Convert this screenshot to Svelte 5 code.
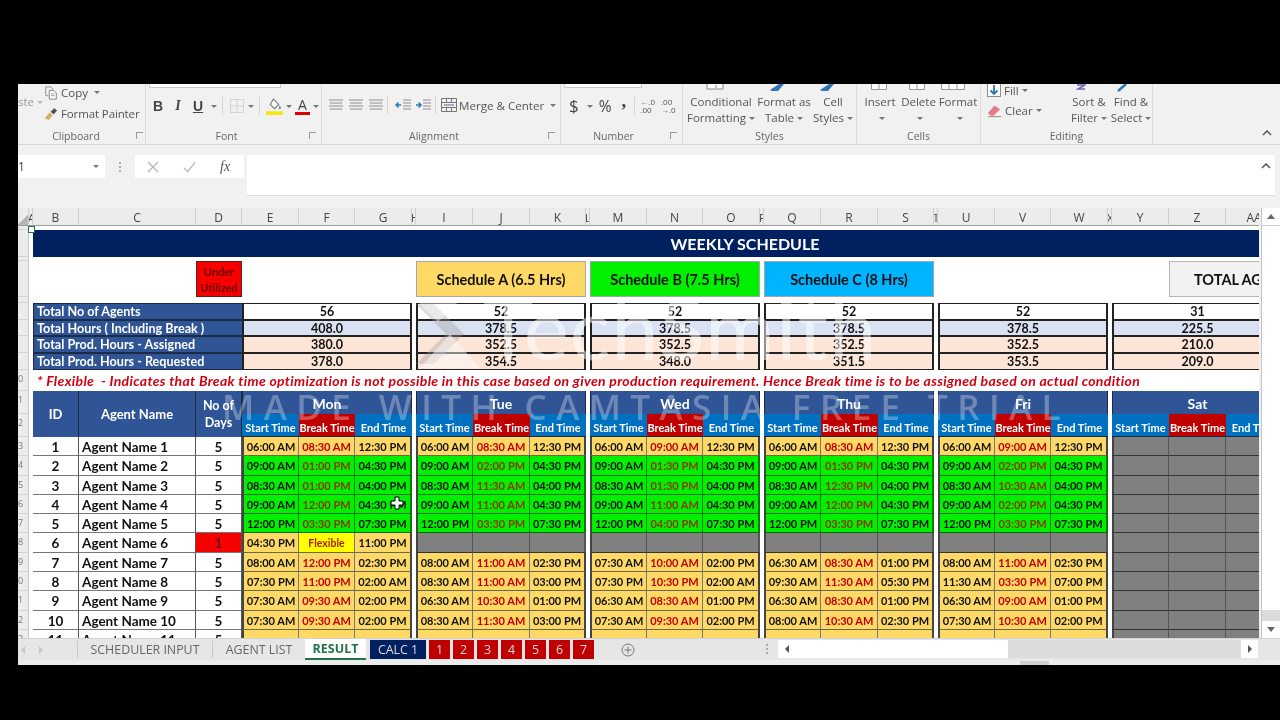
<script>
  const letters = ['', 'A', 'B', 'C', 'D', 'E', 'F', 'G', 'H', 'I', 'J', 'K', 'L', 'M', 'N', 'O', 'P', 'Q', 'R', 'S', 'T', 'U', 'V', 'W', 'X', 'Y', 'Z', 'AA', 'AB', 'AC'];
  const narrow = ['A', 'H', 'L', 'P', 'T', 'X'];

  const totals = [
    { label: 'Total No of Agents', tone: 'plain', values: ['56', '52', '52', '52', '52', '31'] },
    { label: 'Total Hours ( Including Break )', tone: 'blue', values: ['408.0', '378.5', '378.5', '378.5', '378.5', '225.5'] },
    { label: 'Total Prod. Hours - Assigned', tone: 'pink', values: ['380.0', '352.5', '352.5', '352.5', '352.5', '210.0'] },
    { label: 'Total Prod. Hours - Requested', tone: 'pink', values: ['378.0', '354.5', '348.0', '351.5', '353.5', '209.0'] }
  ];

  const week = [
    { name: 'Mon', times: ['06:00 AM,08:30 AM,12:30 PM', '09:00 AM,01:00 PM,04:30 PM', '08:30 AM,01:00 PM,04:00 PM', '09:00 AM,12:00 PM,04:30 PM', '12:00 PM,03:30 PM,07:30 PM', '04:30 PM,Flexible,11:00 PM', '08:00 AM,12:00 PM,02:30 PM', '07:30 PM,11:00 PM,02:00 AM', '07:30 AM,09:30 AM,02:00 PM', '07:30 AM,09:30 AM,02:00 PM', ',,'] },
    { name: 'Tue', times: ['06:00 AM,08:30 AM,12:30 PM', '09:00 AM,02:00 PM,04:30 PM', '08:30 AM,11:30 AM,04:00 PM', '09:00 AM,11:00 AM,04:30 PM', '12:00 PM,03:30 PM,07:30 PM', '', '08:00 AM,11:00 AM,02:30 PM', '08:30 AM,11:00 AM,03:00 PM', '06:30 AM,10:30 AM,01:00 PM', '08:30 AM,11:30 AM,03:00 PM', ',,'] },
    { name: 'Wed', times: ['06:00 AM,09:00 AM,12:30 PM', '09:00 AM,01:30 PM,04:30 PM', '08:30 AM,01:30 PM,04:00 PM', '09:00 AM,11:00 AM,04:30 PM', '12:00 PM,04:00 PM,07:30 PM', '', '07:30 AM,10:00 AM,02:00 PM', '07:30 PM,10:30 PM,02:00 AM', '06:30 AM,08:30 AM,01:00 PM', '07:30 AM,09:30 AM,02:00 PM', ',,'] },
    { name: 'Thu', times: ['06:00 AM,08:30 AM,12:30 PM', '09:00 AM,01:30 PM,04:30 PM', '08:30 AM,12:30 PM,04:00 PM', '09:00 AM,12:00 PM,04:30 PM', '12:00 PM,03:30 PM,07:30 PM', '', '06:30 AM,08:30 AM,01:00 PM', '09:30 AM,11:30 AM,05:30 PM', '06:30 AM,08:30 AM,01:00 PM', '08:00 AM,10:30 AM,02:30 PM', ',,'] },
    { name: 'Fri', times: ['06:00 AM,09:00 AM,12:30 PM', '09:00 AM,02:00 PM,04:30 PM', '08:30 AM,10:30 AM,04:00 PM', '09:00 AM,02:00 PM,04:30 PM', '12:00 PM,03:30 PM,07:30 PM', '', '08:00 AM,11:00 AM,02:30 PM', '11:30 AM,03:30 PM,07:00 PM', '06:30 AM,09:00 AM,01:00 PM', '07:30 AM,10:30 AM,02:00 PM', ',,'] },
    { name: 'Sat', times: ['', '', '', '', '', '', '', '', '', '', ''] }
  ];

  const rows = Array.from({ length: 11 }, (_, i) => i);
  const subHeads = ['Start Time', 'Break Time', 'End Time'];
  const isGreen = (i) => i >= 1 && i <= 4;
  const cellsFor = (day, i) => (day.times[i] === '' ? ['', '', ''] : day.times[i].split(','));
  const toneFor = (day, i) => (day.times[i] === '' ? 'off' : isGreen(i) ? 'green' : 'orange');
  const redTabs = ['1', '2', '3', '4', '5', '6', '7'];
</script>

<div class="screen">
  <div class="window">
    <div class="ribbon">
      <section class="group clipboard">
        <div class="body">
          <div class="paste">ste<i class="caret faint"></i></div>
          <div class="stack">
            <div class="line copy">
              <svg viewBox="0 0 16 16" width="14" height="14"><path d="M2 1h6l2 2v2M2 1v10h3" fill="none" stroke="#8a8a8a"/><path d="M6 5h5l3 3v7H6z" fill="#fff" stroke="#777"/><path d="M8 9h4M8 11h4" stroke="#999"/></svg>
              <span>Copy</span><i class="caret"></i>
            </div>
            <div class="line painter">
              <svg viewBox="0 0 16 16" width="15" height="15"><path d="M1 13l5-6 3 3-4 5z" fill="#d9a95c"/><path d="M7 6l4-4 3 3-4 4z" fill="#555"/></svg>
              <span>Format Painter</span>
            </div>
          </div>
        </div>
        <div class="label">Clipboard<i class="launcher"></i></div>
      </section>

      <section class="group font">
        <div class="combo"></div>
        <div class="body row">
          <b class="tool sans">B</b>
          <em class="tool serif strong">I</em>
          <u class="tool sans">U</u>
          <i class="caret"></i>
          <span class="sep"></span>
          <svg class="icon" viewBox="0 0 16 16" width="16" height="16"><path d="M1.5 1.5h13v13h-13zM8 1.5v13M1.5 8h13" fill="none" stroke="#bbb" stroke-dasharray="1 1"/></svg>
          <i class="caret"></i>
          <span class="sep"></span>
          <svg class="icon" viewBox="0 0 16 16" width="17" height="17"><path d="M7 1l5 5-4 4-4-4z" fill="#fff" stroke="#777"/><path d="M13 7c1 2 1.500 3 0 3.500-1-.5-1-1.500 0-3.500z" fill="#3d78c2"/><rect x="0" y="12.500" width="16" height="3.500" fill="#f4e80c"/></svg>
          <i class="caret"></i>
          <span class="colour">A</span>
          <i class="caret"></i>
        </div>
        <div class="label">Font<i class="launcher"></i></div>
      </section>

      <section class="group align">
        <div class="body row">
          {#each [0, 1, 2] as n}
            <svg class="icon lines" viewBox="0 0 14 12" width="14" height="12"><path d="M0 1h14M1 4h12M0 7h14M1 10h12" stroke="#8d8d8d" fill="none"/></svg>
          {/each}
          <span class="sep"></span>
          <svg class="icon indent" viewBox="0 0 16 12" width="16" height="12"><path d="M8 1h8M8 4h8M8 7h8M8 10h8" stroke="#8d8d8d"/><path d="M6 6H1m2.500-2.500L1 6l2.500 2.500" stroke="#2e75b6" stroke-width="1.500" fill="none"/></svg>
          <svg class="icon indent" viewBox="0 0 16 12" width="16" height="12"><path d="M8 1h8M8 4h8M8 7h8M8 10h8" stroke="#8d8d8d"/><path d="M1 6h5M3.500 3.500L6 6 3.500 8.500" stroke="#2e75b6" stroke-width="1.500" fill="none"/></svg>
          <span class="sep"></span>
          <svg class="icon mergeicon" viewBox="0 0 16 14" width="16" height="14"><path d="M.5.5h15v13H.5zM.5 4.500h15M.5 9.500h15M5.500.5v4M10.500.5v4M5.500 9.500v4M10.500 9.500v4" fill="none" stroke="#777"/><path d="M3 7h10" stroke="#2e75b6"/></svg>
          <span class="merge">Merge &amp; Center</span>
          <i class="caret"></i>
        </div>
        <div class="label">Alignment<i class="launcher"></i></div>
      </section>

      <section class="group number">
        <div class="combo"></div>
        <div class="body row">
          <span class="dollar">$</span>
          <i class="caret"></i>
          <span class="percent">%</span>
          <b class="comma">,</b>
          <span class="sep"></span>
          <span class="decimal"><span><b>←</b>.0</span><span>.00</span></span>
          <span class="decimal"><span>.00</span><span><b>→</b>.0</span></span>
        </div>
        <div class="label">Number<i class="launcher"></i></div>
      </section>

      <section class="group styles">
        <div class="tops">
          <svg viewBox="0 0 20 8" width="20" height="8" style="margin-left:23px"><path d="M1 0v5h16V0M10 1v3" fill="#fff" stroke="#888"/></svg>
          <svg viewBox="0 0 24 8" width="24" height="8" style="margin-left:38px"><path d="M6 6l9-6h5l-6 7H8z" fill="#2e75b6"/></svg>
          <svg viewBox="0 0 24 8" width="24" height="8" style="margin-left:26px"><path d="M6 6l9-6h5l-6 7H8z" fill="#2e75b6"/></svg>
        </div>
        <div class="body big">
          <div class="bigbtn" style="width:74px"><span>Conditional</span><span>Formatting<i class="caret"></i></span></div>
          <div class="bigbtn" style="width:52px"><span>Format as</span><span>Table<i class="caret"></i></span></div>
          <div class="bigbtn" style="width:46px"><span>Cell</span><span>Styles<i class="caret"></i></span></div>
        </div>
        <div class="label">Styles</div>
      </section>

      <section class="group cells">
        <div class="tops">
          <svg viewBox="0 0 16 6" width="16" height="6" style="margin-left:14px"><path d="M.5 0v5.500h15V0M8 0v5" fill="#fff" stroke="#999"/></svg>
          <svg viewBox="0 0 16 6" width="16" height="6" style="margin-left:22px"><path d="M.5 0v5.500h15V0M8 0v5" fill="#fff" stroke="#999"/></svg>
          <svg viewBox="0 0 24 6" width="24" height="6" style="margin-left:16px"><path d="M.5 0v5.500h23V0M8 0v5M16 0v5" fill="#fff" stroke="#999"/></svg>
        </div>
        <div class="body big">
          <div class="bigbtn" style="width:40px"><span>Insert</span><span><i class="caret"></i></span></div>
          <div class="bigbtn" style="width:37px"><span>Delete</span><span><i class="caret"></i></span></div>
          <div class="bigbtn" style="width:42px"><span>Format</span><span><i class="caret"></i></span></div>
        </div>
        <div class="label">Cells</div>
      </section>

      <section class="group editing">
        <div class="tops">
          <svg viewBox="0 0 10 6" width="10" height="6" style="margin-left:95px"><path d="M1 1h8L2 5h7" fill="none" stroke="#7b5fb5" stroke-width="1.500"/></svg>
          <svg viewBox="0 0 12 8" width="12" height="8" style="margin-left:30px"><path d="M10 0L2 7" stroke="#2e75b6" stroke-width="2.500"/></svg>
        </div>
        <div class="body big">
          <div class="stack fillclear">
            <div class="line fill">
              <svg viewBox="0 0 14 14" width="14" height="14"><rect x=".5" y=".5" width="13" height="13" fill="#fff" stroke="#8d8d8d"/><path d="M7 2v9M3.500 7.500L7 11l3.500-3.500" fill="none" stroke="#2e75b6" stroke-width="1.800"/></svg>
              <span>Fill</span><i class="caret"></i>
            </div>
            <div class="line clear">
              <svg viewBox="0 0 16 14" width="15" height="14"><path d="M1 9l7-8 6 4-7 7H4z" fill="#e57a8c"/><path d="M1 13h14" stroke="#888"/></svg>
              <span>Clear</span><i class="caret"></i>
            </div>
          </div>
          <div class="bigbtn" style="width:42px"><span>Sort &amp;</span><span>Filter<i class="caret"></i></span></div>
          <div class="bigbtn" style="width:42px"><span>Find &amp;</span><span>Select<i class="caret"></i></span></div>
        </div>
        <div class="label">Editing</div>
      </section>

      <div class="collapse"><svg viewBox="0 0 10 6" width="10" height="6"><path d="M1 5l4-4 4 4" fill="none" stroke="#555" stroke-width="1.500"/></svg></div>
    </div>

    <div class="formula">
      <div class="namebox"><span>1</span><i class="caret"></i></div>
      <div class="dots"></div>
      <div class="fxbox">
        <svg viewBox="0 0 12 12" width="12" height="12"><path d="M1 1l10 10M11 1L1 11" stroke="#b5b5b5" stroke-width="1.300"/></svg>
        <svg viewBox="0 0 14 12" width="13" height="12"><path d="M1 7l4 4 8-10" fill="none" stroke="#b5b5b5" stroke-width="1.300"/></svg>
        <em>fx</em>
      </div>
      <div class="input"><svg viewBox="0 0 10 6" width="10" height="6"><path d="M1 5l4-4 4 4" fill="none" stroke="#555" stroke-width="1.500"/></svg></div>
    </div>

    <div class="sheetwrap">
      <div class="viewport">
        <div class="grid">
          {#each letters as l}
            <div class="letter" class:corner={l === ''} class:narrow={narrow.includes(l)}>{l}</div>
          {/each}

          <div class="rowhead"></div>
          <div></div>

          <div class="rowhead"></div>
          <div></div>
          <div class="title">WEEKLY SCHEDULE</div>

          <div class="rowhead"></div>
          <div></div>

          <div class="rowhead"></div>
          <div></div>
          <div class="span2"></div>
          <div class="under">Under Utilized</div>
          <div class="span3"></div>
          <div></div>
          <div class="span3 plan a">Schedule A (6.5 Hrs)</div>
          <div></div>
          <div class="span3 plan b">Schedule B (7.5 Hrs)</div>
          <div></div>
          <div class="span3 plan c">Schedule C (8 Hrs)</div>
          <div></div>
          <div class="span3"></div>
          <div></div>
          <div></div>
          <div class="totalbox">TOTAL AGENTS</div>

          <div class="rowhead"></div>
          <div></div>

          {#each totals as t}
            <div class="rowhead"></div>
            <div></div>
            <div class="span3 sumlabel">{t.label}</div>
            {#each t.values as v, i}
              <div class="span3 sum {t.tone}">{v}</div>
              {#if i < 5}<div></div>{/if}
            {/each}
          {/each}

          <div class="rowhead">0</div>
          <div></div>
          <div class="note">* Flexible  - Indicates that Break time optimization is not possible in this case based on given production requirement. Hence Break time is to be assigned based on actual condition</div>

          <div class="rowhead">1</div>
          <div></div>
          <div class="headcell tall">ID</div>
          <div class="headcell tall">Agent Name</div>
          <div class="headcell tall nodays">No of Days</div>
          {#each week as day, i}
            <div class="span3 headcell dayname">{day.name}</div>
            {#if i < 5}<div></div>{/if}
          {/each}

          <div class="rowhead">2</div>
          <div></div>
          {#each week as day, i}
            {#each subHeads as s}
              <div class="sub" class:break={s === 'Break Time'}>{s}</div>
            {/each}
            {#if i < 5}<div></div>{/if}
          {/each}

          {#each rows as r}
            <div class="rowhead">{(r + 3) % 10}</div>
            <div></div>
            <div class="agent center">{r + 1}</div>
            <div class="agent">Agent Name {r + 1}</div>
            <div class="agent center" class:short={r === 5}>{r === 5 ? 1 : 5}</div>
            {#each week as day, i}
              {#each cellsFor(day, r) as time, c}
                <div class="time {toneFor(day, r)}" class:first={c === 0} class:last={c === 2} class:red={c === 1} class:flex={time === 'Flexible'}>{time}</div>
              {/each}
              {#if i < 5}<div></div>{/if}
            {/each}
          {/each}
        </div>

        <i class="handle"></i>
        <div class="logo" aria-hidden="true">
          <svg viewBox="0 0 64 68" width="64" height="68"><path d="M0 4h18l30 30-30 30H0l30-30z" fill="#9a9a9a" opacity=".35"/><path d="M34 34l30 34H4z" fill="#fff" opacity=".45"/><path d="M0 0h44L22 22z" fill="#fff" opacity=".4"/></svg>
        </div>
        <div class="techsmith" aria-hidden="true">TechSmith</div>
        <div class="camtasia" aria-hidden="true">MADE WITH CAMTASIA FREE TRIAL</div>
        <svg class="cursor" viewBox="0 0 14 14" width="14" height="14" aria-hidden="true"><path d="M5 1h4v4h4v4H9v4H5V9H1V5h4z" fill="#fff" stroke="#000"/></svg>
      </div>

      <div class="vscroll">
        <div class="arrow"><i class="up"></i></div>
        <div class="thumb"></div>
        <div class="track"></div>
        <div class="arrow"><i class="down"></i></div>
      </div>
    </div>

    <div class="tabs">
      <div class="navs">
        <i class="nav left"></i><i class="nav right"></i>
      </div>
      <div class="tab plain first">SCHEDULER INPUT</div>
      <div class="tab plain second">AGENT LIST</div>
      <div class="tab current">RESULT</div>
      <div class="tab calc">CALC 1</div>
      {#each redTabs as t}
        <div class="tab num">{t}</div>
      {/each}
      <div class="add"><svg viewBox="0 0 14 14" width="14" height="14"><circle cx="7" cy="7" r="6" fill="none" stroke="#777"/><path d="M7 3.500v7M3.500 7h7" stroke="#777"/></svg></div>
      <div class="hdots"></div>
      <div class="hscroll">
        <div class="hbtn"><i class="nav left dark"></i></div>
        <div class="hthumb"></div>
        <div class="htrack"></div>
        <div class="hbtn"><i class="nav right dark"></i></div>
      </div>
    </div>

    <div class="status"><div class="grip"></div></div>
  </div>
</div>

<style>
  :global(body) { margin: 0; background: #000; }

  .screen {
    width: 1280px; height: 720px; box-sizing: border-box; overflow: hidden;
    padding: 84px 0 55px 18px; background: #000;
    font-family: "Open Sans", "Liberation Sans", sans-serif;
  }
  .window { height: 581px; display: flex; flex-direction: column; background: #f0f0f0; overflow: hidden; filter: blur(0.35px); }

  .caret { display: inline-block; width: 0; height: 0; margin-left: 5px; border: 3px solid transparent; border-top: 3px solid #777; border-bottom: 0; vertical-align: middle; }
  .caret.faint { border-top-color: #bbb; }

  /* ribbon */
  .ribbon { height: 60px; flex: none; display: flex; position: relative; background: #f1f1f1; border-bottom: 1px solid #d6d6d6; box-sizing: content-box; font-size: 11.5px; color: #555; }
  .group { position: relative; display: flex; flex-direction: column; box-sizing: border-box; height: 60px; border-right: 1px solid #dcdcdc; overflow: hidden; }
  .body { flex: 1; display: flex; min-height: 0; }
  .label { height: 20px; flex: none; padding-right: 14px; text-align: center; line-height: 24px; font-size: 10.5px; color: #666; position: relative; }
  .launcher { position: absolute; right: 5px; top: 8px; width: 6px; height: 6px; border-left: 1px solid #999; border-top: 1px solid #999; }
  .row { align-items: center; }
  .sep { width: 1px; height: 18px; background: #d4d4d4; flex: none; }
  .combo { height: 3px; flex: none; margin: 0 40px 0 3px; background: #fff; border: 1px solid #c9c9c9; border-top: 0; }
  .icon { flex: none; }
  .tops { position: absolute; top: 0; left: 0; display: flex; }

  .clipboard { width: 128px; }
  .clipboard .label { padding-right: 0; padding-left: 3px; width: 110px; }
  .clipboard .launcher { right: -12px; }
  .paste { width: 26px; padding-top: 10px; color: #9a9a9a; font-size: 11.5px; line-height: 16px; }
  .stack { display: flex; flex-direction: column; }
  .line { display: flex; align-items: center; gap: 3px; white-space: nowrap; }
  .copy { margin-top: 1px; height: 15px; }
  .painter { margin-top: 5px; height: 16px; gap: 2px; letter-spacing: -0.12px; }
  .clipboard .caret { margin-left: 3px; }

  .font { width: 176px; }
  .font .body { padding-left: 2px; }
  .tool { width: 20px; text-align: center; font-size: 14px; color: #444; font-style: normal; text-decoration: none; flex: none; }
  .serif { font-family: "Liberation Serif", serif; }
  .sans { font-family: "Liberation Sans", sans-serif; font-weight: 700; }
  .strong { font-weight: 700; }
  em.tool { font-style: italic; }
  u.tool { text-decoration: underline; }
  .font .caret { margin-left: 3px; flex: none; }
  .font .sep { margin: 0 6px 0 5px; }
  .colour { margin-left: 3px; width: 15px; flex: none; text-align: center; font-size: 14px; line-height: 14px; color: #444; border-bottom: 3px solid #d90000; }

  .align { width: 239px; }
  .align .body { padding: 2px 0 0 7px; gap: 6px; }
  .align .sep { margin: 0 1px 0 -2px; }
  .indent + .indent { margin-left: -2px; }
  .mergeicon { margin-left: -2px; }
  .merge { white-space: nowrap; margin-left: -4px; font-size: 11.6px; }
  .align .caret { margin-left: 0; }

  .number { width: 122px; }
  .number .body { padding-left: 8px; }
  .number .label { padding-right: 16px; }
  .dollar { font-size: 17px; line-height: 18px; color: #444; }
  .number .caret { margin-left: 8px; }
  .percent { margin-left: 6px; font-size: 15.5px; color: #444; }
  .comma { margin: -10px 8px 0 10px; font-family: "Liberation Serif", serif; font-size: 19px; line-height: 16px; color: #444; }
  .decimal { display: flex; flex-direction: column; margin-left: 5px; font-size: 8px; line-height: 8.5px; color: #555; }
  .decimal + .decimal { margin-left: 6px; }
  .decimal b { color: #2e75b6; }

  .big { padding-top: 10px; }
  .bigbtn { display: flex; flex-direction: column; align-items: center; flex: none; white-space: nowrap; line-height: 16px; gap: 0; font-size: 11.5px; }
  .bigbtn .caret { margin-left: 3px; }

  .styles { width: 174px; }
  .styles .big { padding-left: 1px; }
  .styles .label { padding-right: 0; }
  .cells { width: 124px; }
  .cells .big { padding-left: 3px; }
  .cells .label { padding-right: 0; }
  .editing { width: 172px; }
  .editing .big { padding-top: 0; padding-left: 6px; }
  .editing .bigbtn { padding-top: 10px; }
  .editing .label { padding-right: 0; }
  .fillclear { width: 82px; }
  .fill { height: 14px; margin-top: -1px; gap: 3px; }
  .clear { margin-top: 6px; gap: 3px; }
  .fillclear .caret { margin-left: 0; }
  .collapse { position: absolute; right: 8px; bottom: 5px; }

  /* formula bar */
  .formula { height: 63px; flex: none; box-sizing: border-box; padding-top: 10px; display: flex; align-items: flex-start; background: #f1f1f1; color: #444; }
  .namebox { width: 87px; height: 23px; box-sizing: border-box; padding: 0 4px 0 0; display: flex; align-items: center; justify-content: space-between; background: #fff; font-size: 12px; }
  .namebox .caret { margin-right: 2px; }
  .dots { width: 2px; height: 10px; margin: 7px 14px; border-left: 2px dotted #aaa; box-sizing: border-box; }
  .fxbox { width: 109px; height: 23px; margin-left: 0; display: flex; align-items: center; gap: 24px; padding-left: 12px; box-sizing: border-box; background: #fff; }
  .fxbox em { font-family: "Liberation Serif", serif; font-size: 14px; color: #555; }
  .input { flex: 1; height: 41px; margin: 0 5px 0 3px; background: #fff; border-bottom: 1px solid #ddd; display: flex; justify-content: flex-end; padding: 8px 4px 0 0; box-sizing: border-box; }

  /* sheet */
  .sheetwrap { height: 430px; flex: none; display: flex; background: #f1f1f1; }
  .viewport { width: 1241px; flex: none; position: relative; overflow: hidden; background: #fff; }
  .grid {
    display: grid; width: max-content; color: #111;
    font-family: Lato, "Liberation Sans", sans-serif;
    grid-template-columns: 11px 4px 46px 117px 46px 57px 56px 57px 4px 57px 57px 56px 4px 57px 56px 57px 4px 57px 57px 56px 4px 57px 56px 57px 4px 57px 57px 57px 57px 117px;
    grid-template-rows: 18px 4px 27px 4px 36px 6px 17px 16px 17px 17px 21px 23px 23px repeat(11, 19.3px);
  }
  .grid > div { box-sizing: border-box; min-width: 0; }

  .letter { text-align: center; line-height: 20px; font-family: "Open Sans", sans-serif; font-size: 12px; color: #444; background: #ececec; border-bottom: 1px solid #9c9c9c; border-right: 1px solid #cfcfcf; overflow: hidden; white-space: nowrap; }
  .letter.narrow { color: #444; font-size: 11px; text-indent: -1px; }
  .letter.corner { background: linear-gradient(135deg, #ececec 62%, #b5b5b5 62%); }
  .rowhead { grid-column: 1; background: #ececec; border-right: 1px solid #c9c9c9; border-bottom: 1px solid #d3d3d3; font-family: "Open Sans", sans-serif; font-size: 9px; color: #777; overflow: hidden; line-height: 17px; }

  .title { grid-column: 3 / -1; background: #002060; color: #fff; font-weight: 700; font-size: 16px; line-height: 27px; text-align: center; }
  .span2 { grid-column: span 2; }
  .span3 { grid-column: span 3; }

  .under { background: #f80000; border: 1px solid #5a2020; color: #6a0000; font-weight: 700; font-size: 11px; line-height: 16px; text-align: center; padding-top: 2px; }
  .plan { display: flex; align-items: center; justify-content: center; border: 1px solid #a6a6a6; font-weight: 700; font-size: 14.5px; }
  .plan.a { background: #ffd966; }
  .plan.b { background: #00f000; }
  .plan.c { background: #00b4ff; }
  .totalbox { grid-column: span 4; display: flex; align-items: center; padding-left: 24px; background: #f2f2f2; border: 1px solid #b5b5b5; font-weight: 700; font-size: 14.5px; white-space: nowrap; }

  .sumlabel { background: #2f5597; color: #fff; font-weight: 700; font-size: 12.6px; line-height: 15px; padding-left: 3px; border: 1px solid #1c2a44; border-width: 1px 0 1px 1px; white-space: nowrap; }
  .sum { text-align: center; font-weight: 700; font-size: 12.5px; line-height: 15px; border: 1px solid #222; border-width: 1px 2px; }
  .sum.plain { background: #fff; }
  .sum.blue { background: #d9e1f2; }
  .sum.pink { background: #fce4d6; }

  .note { grid-column: 3 / -1; padding-left: 4px; color: #d00012; font-weight: 700; font-style: italic; font-size: 14px; letter-spacing: 0.32px; line-height: 21px; white-space: pre; }

  .headcell { background: #2f5597; color: #fff; font-weight: 700; font-size: 13px; display: flex; align-items: center; justify-content: center; text-align: center; border-right: 1px solid #1c2a44; }
  .headcell.tall { grid-row: span 2; }
  .nodays { font-size: 12.5px; line-height: 17px; padding: 0 4px; }
  .dayname { font-size: 14px; padding-top: 1px; border-left: 1px solid #1c2a44; border-right: 1px solid #1c2a44; }
  .sub { background: #0070c0; color: #fff; font-weight: 700; font-size: 11px; line-height: 27px; text-align: center; white-space: nowrap; overflow: hidden; border-bottom: 1px solid #1c2a44; }
  .sub.break { background: #c00000; }

  .agent { background: #fff; font-weight: 700; font-size: 13.5px; line-height: 20px; padding-left: 3px; border-bottom: 1px solid #777; border-right: 1px solid #555; white-space: nowrap; }
  .agent.center { text-align: center; padding-left: 0; }
  .agent.short { background: #f80000; color: #611; }

  .time { font-weight: 700; font-size: 11px; line-height: 20px; text-align: center; white-space: nowrap; border-bottom: 1px solid #6a6a4a; border-right: 1px solid #777; }
  .time.first { border-left: 2px solid #444; }
  .time.last { border-right: 2px solid #444; }
  .time.orange { background: #ffd966; }
  .time.green { background: #00f000; border-bottom-color: #0a6a0a; border-right-color: #0a7a0a; }
  .time.off { background: #808080; border-bottom-color: #333; border-right-color: #555; }
  .time.red { color: #c00000; }
  .time.green.red { color: #8a3a00; }
  .time.flex { background: #ffff00; color: #b02000; font-size: 10.5px; }

  /* recording watermarks and pointer, they sit over the sheet */
  .handle { position: absolute; left: 10px; top: 18px; width: 5px; height: 5px; border: 1px solid #217346; background: #fff; }
  .logo { position: absolute; left: 398px; top: 92px; }
  .techsmith { position: absolute; left: 465px; top: 69px; font-family: Lato, sans-serif; font-size: 85px; letter-spacing: 1px; line-height: 100px; font-weight: 400; color: rgba(255, 255, 255, 0.5); white-space: nowrap; }
  .camtasia { position: absolute; left: 204px; top: 177px; font-family: "Open Sans", sans-serif; font-size: 35px; font-weight: 600; line-height: 44px; letter-spacing: 9.4px; color: rgba(255, 255, 255, 0.3); white-space: nowrap; }
  .cursor { position: absolute; left: 372px; top: 288px; }

  .vscroll { flex: 1; display: flex; flex-direction: column; margin-left: 2px; border-left: 1px solid #c4c4c4; background: #fff; box-sizing: border-box; }
  .arrow { height: 17px; flex: none; display: flex; align-items: center; justify-content: center; background: #fff; }
  .up { border: 4px solid transparent; border-bottom: 5px solid #666; border-top: 0; }
  .down { border: 4px solid transparent; border-top: 5px solid #666; border-bottom: 0; }
  .thumb { flex: 1; background: #fff; border-top: 1px solid #ccc; }
  .track { height: 11px; flex: none; background: #dcdcdc; }

  /* sheet tabs */
  .tabs { height: 22px; flex: none; display: flex; background: #e6e6e6; font-size: 12.4px; color: #666; position: relative; border-top: 1px solid #d2d2d2; box-sizing: border-box; }
  .navs { width: 60px; display: flex; gap: 14px; padding-left: 3px; align-items: center; border-right: 1px solid #c8c8c8; margin: 2px 0; flex: none; box-sizing: border-box; }
  .nav { display: block; border: 4px solid transparent; border-right: 0; border-left: 4px solid #c8c8c8; }
  .nav.left { border-left: 0; border-right: 4px solid #c8c8c8; }
  .nav.dark { border-left-color: #555; border-right-color: #555; }
  .tab { display: flex; align-items: center; justify-content: center; white-space: nowrap; flex: none; box-sizing: border-box; }
  .tab.first { width: 135px; border-right: 1px solid #c8c8c8; margin: 2px 0; }
  .tab.second { width: 92px; }
  .tab.current { width: 61px; background: #fff; color: #217346; font-weight: 700; border-bottom: 2px solid #217346; margin-right: 2px; font-size: 12.5px; }
  .tab.calc { width: 56px; margin: 1px 3px 1px 2px; background: #002060; color: #ddd; }
  .tab.num { width: 21px; margin: 1px 3px 1px 0; background: #c00000; color: #ddd; }
  .add { width: 14px; margin: 4px 0 0 24px; flex: none; }
  .hdots { width: 2px; height: 10px; margin: 5px 0 0 131px; border-left: 2px dotted #aaa; box-sizing: border-box; flex: none; }
  .hscroll { width: 480px; margin-left: 10px; display: flex; height: 18px; margin-top: 1px; background: #dcdcdc; flex: none; }
  .hbtn { width: 17px; flex: none; background: #fff; display: flex; align-items: center; justify-content: center; }
  .hthumb { width: 213px; background: #fff; flex: none; }
  .htrack { flex: 1; }
  .status { height: 5px; flex: none; background: #ececec; position: relative; }
  .grip { position: absolute; left: 1002px; top: 1px; width: 29px; height: 4px; background: #d0d0d0; }
</style>
